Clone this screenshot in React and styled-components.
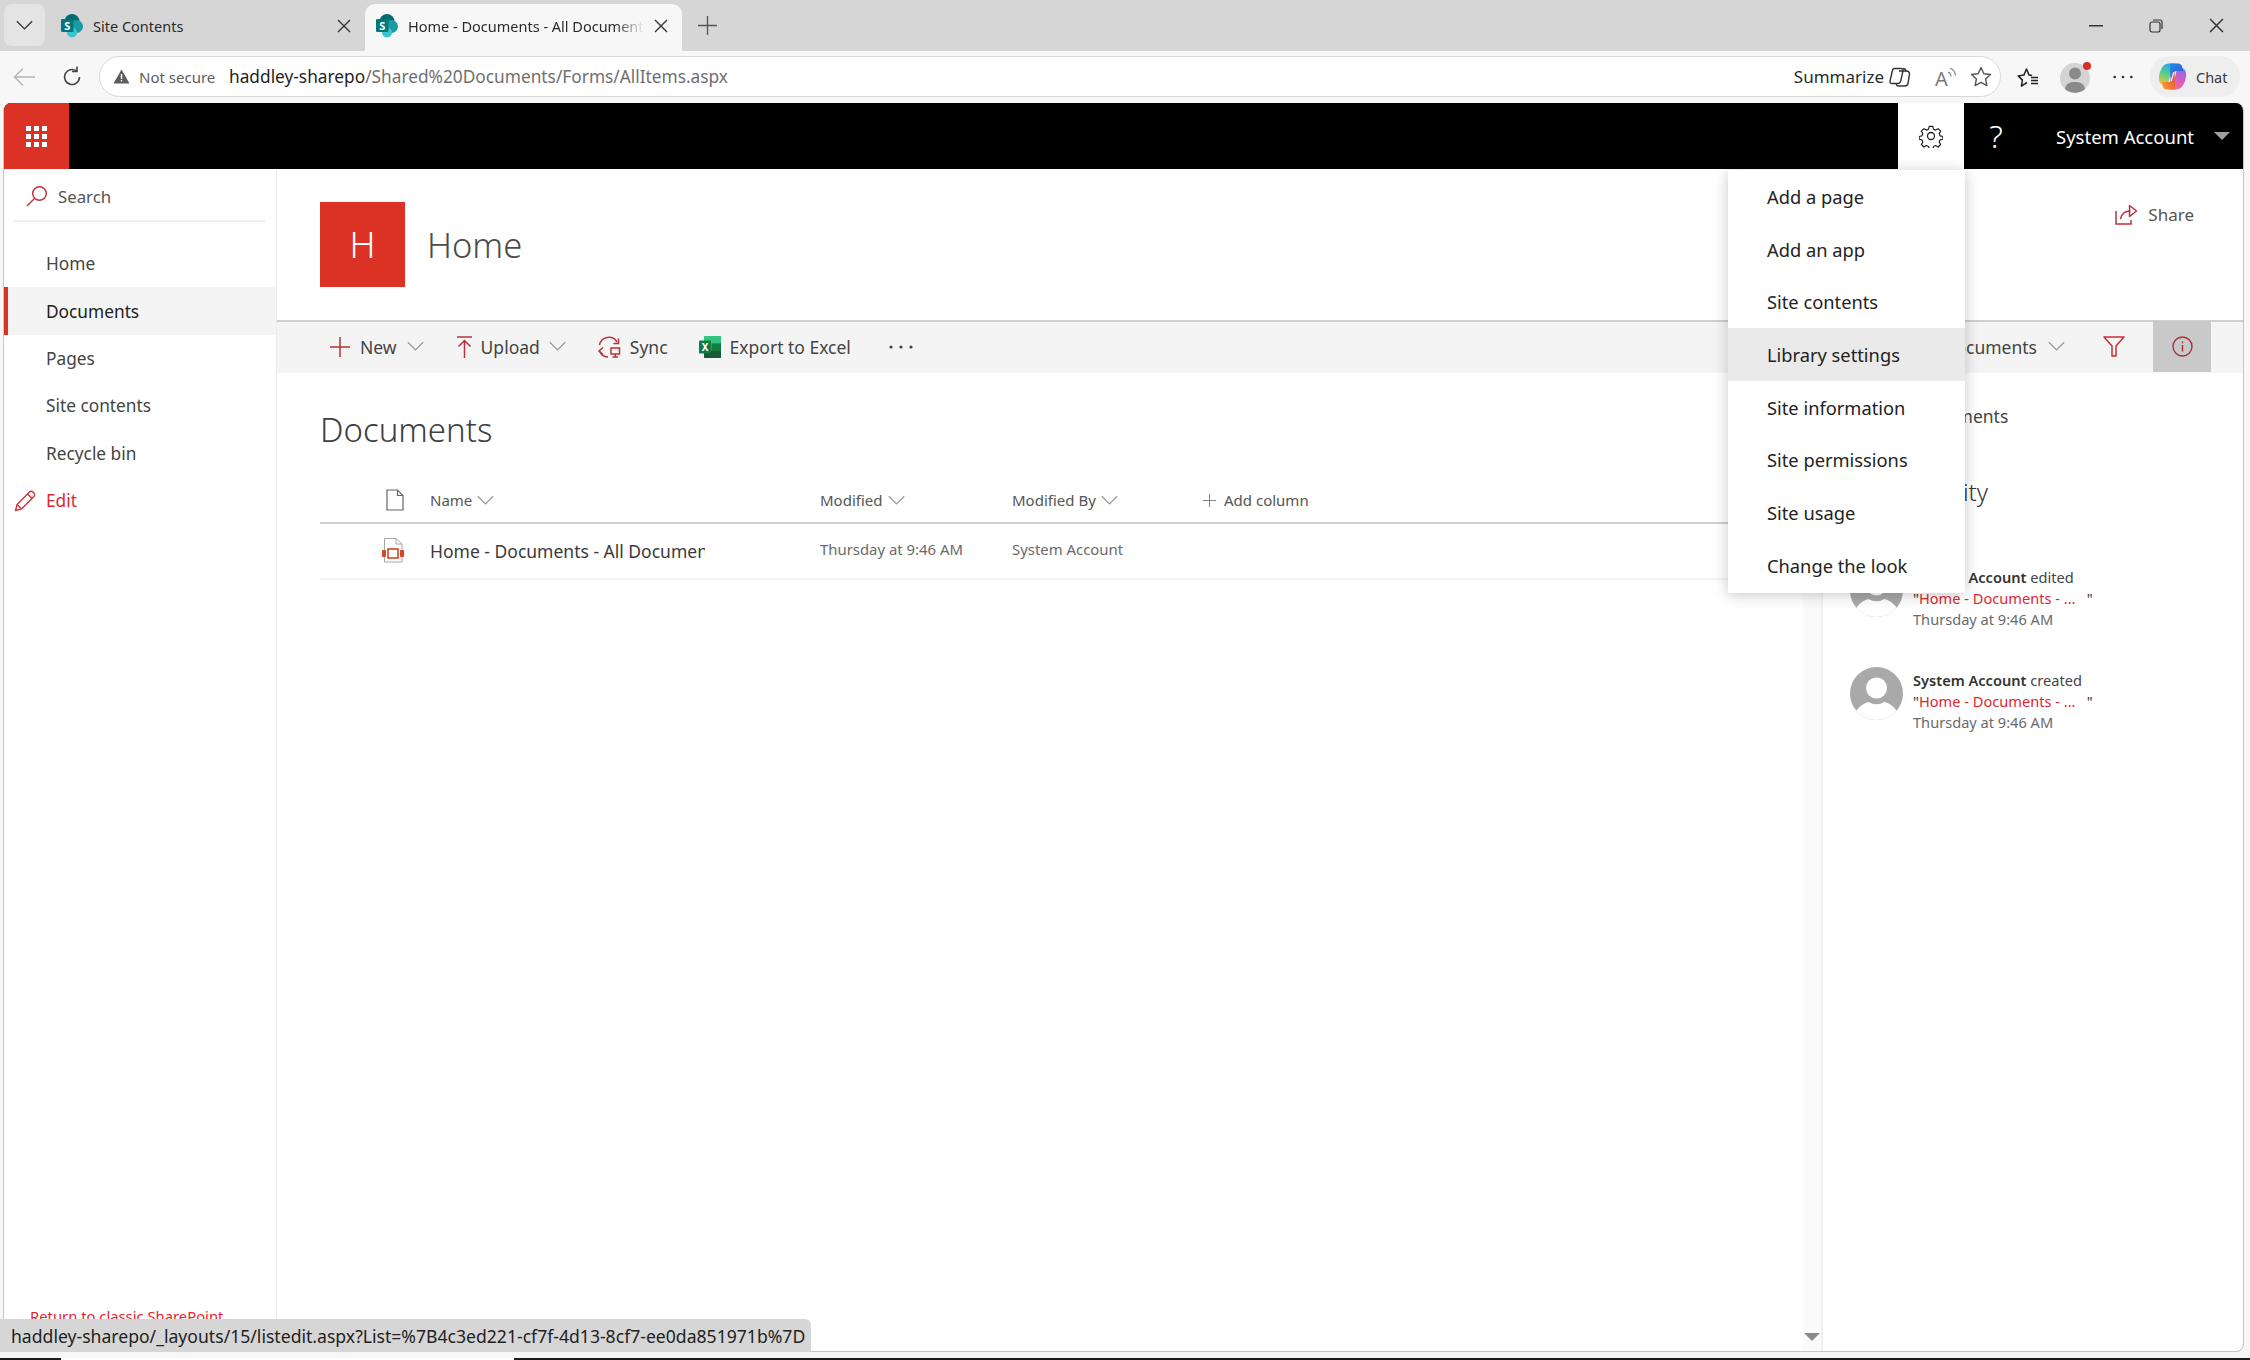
import React from 'react'
import styled, { createGlobalStyle } from 'styled-components'

const FONT = '"Noto Sans", "Open Sans", "Liberation Sans", sans-serif'
const RED = '#dc3125'
const ICON_RED = '#b5343a'

const Global = createGlobalStyle`
  html, body { margin: 0; padding: 0; background: #f7f7f7; }
  * { box-sizing: border-box; }
`

// browser chrome
const Page = styled.div`
  position: relative;
  width: 2250px;
  height: 1360px;
  display: flex;
  flex-direction: column;
  overflow: hidden;
  background: #f7f7f7;
  font-family: ${FONT};
  color: #333;
`
const TabStrip = styled.div`
  height: 51px;
  flex: none;
  display: flex;
  align-items: flex-end;
  padding-left: 4px;
  background: #d6d6d6;
`
const TabListButton = styled.div`
  width: 41px;
  height: 42px;
  margin-bottom: 5px;
  margin-right: 5px;
  border-radius: 8px;
  background: #e4e4e4;
  display: flex;
  align-items: center;
  justify-content: center;
`
const Tab = styled.div`
  position: relative;
  height: 47px;
  width: ${p => p.$width}px;
  display: flex;
  align-items: center;
  gap: 10px;
  padding: 0 14px 4px 11px;
  font-size: 14.5px;
  color: #2b2b2b;
  border-radius: 10px 10px 0 0;
  background: ${p => (p.$active ? '#f7f7f7' : 'transparent')};
`
const TabTitle = styled.div`
  flex: 1;
  overflow: hidden;
  white-space: nowrap;
  ${p => p.$fade && 'mask-image: linear-gradient(to right, #000 88%, transparent 100%);'}
`
const NewTab = styled.div`
  width: 50px;
  height: 47px;
  display: flex;
  align-items: center;
  justify-content: center;
  padding-bottom: 4px;
`
const WindowButtons = styled.div`
  margin-left: auto;
  height: 51px;
  display: flex;
  align-items: center;
  padding-right: 3px;
`
const WindowButton = styled.div`
  width: 60.5px;
  display: flex;
  justify-content: center;
`
const Toolbar = styled.div`
  height: 52px;
  flex: none;
  display: flex;
  align-items: center;
  padding-bottom: 1px;
  background: #f7f7f7;
`
const ToolIcon = styled.div`
  flex: none;
  width: ${p => p.$w || 22}px;
  margin-left: ${p => p.$ml || 0}px;
  display: flex;
  align-items: center;
  justify-content: center;
`
const AddressBar = styled.div`
  width: 1902px;
  height: 41px;
  margin-left: 16px;
  flex: none;
  display: flex;
  align-items: center;
  padding: 0 8px 0 13px;
  border: 1px solid #d8d8d8;
  border-radius: 21px;
  background: #fff;
`
const NotSecure = styled.div`
  width: 90px;
  margin-left: 9px;
  font-size: 15px;
  color: #5c5c5c;
  white-space: nowrap;
`
const Url = styled.div`
  color: #6f6f6f;
  white-space: nowrap;
  font-size: 17.3px;
  b { font-weight: 400; color: #1f1f1f; }
`
const AddressActions = styled.div`
  margin-left: auto;
  display: flex;
  align-items: center;
  gap: 4px;
`
const Summarize = styled.div`
  font-size: 17px;
  color: #2b2b2b;
  white-space: nowrap;
`
const ChatPill = styled.div`
  width: 90px;
  height: 41px;
  margin-left: 17px;
  flex: none;
  display: flex;
  align-items: center;
  gap: 9px;
  padding-left: 8px;
  border-radius: 20px;
  background: #eeeeee;
  font-size: 14.5px;
  color: #3a3a3a;
`

// sharepoint frame
const Frame = styled.div`
  position: relative;
  flex: 1;
  min-height: 0;
  margin: 0 6px 6px 3px;
  display: flex;
  flex-direction: column;
  overflow: hidden;
  background: #fff;
  border: 1px solid #c6c6c6;
  border-top: none;
  border-radius: 8px;
`
const SuiteBar = styled.div`
  height: 66px;
  flex: none;
  display: flex;
  align-items: center;
  background: #000;
  color: #fff;
`
const Waffle = styled.div`
  width: 65px;
  height: 100%;
  display: flex;
  align-items: center;
  justify-content: center;
  background: ${RED};
`
const SuiteGear = styled.div`
  width: 66px;
  height: 100%;
  margin-left: auto;
  display: flex;
  align-items: center;
  justify-content: center;
  background: #fff;
`
const SuiteHelp = styled.div`
  width: 64px;
  text-align: center;
  font-size: 32px;
  font-weight: 300;
  line-height: 1;
`
const SuiteUser = styled.div`
  display: flex;
  align-items: center;
  margin-left: 28px;
  padding-right: 13px;
  font-size: 18.5px;
  gap: 20px;
  white-space: nowrap;
`
const Caret = styled.div`
  width: 0;
  height: 0;
  border-left: 8px solid transparent;
  border-right: 8px solid transparent;
  border-top: 8px solid ${p => p.$color || '#a0a0a0'};
`
const Body = styled.div`
  flex: 1;
  min-height: 0;
  display: flex;
`
const Sidebar = styled.div`
  width: 273px;
  flex: none;
  display: flex;
  flex-direction: column;
  border-right: 1px solid #ececec;
`
const SearchRow = styled.div`
  height: 53px;
  margin: 0 11px 0 10px;
  padding: 3px 0 0 12px;
  display: flex;
  align-items: center;
  gap: 10px;
  border-bottom: 2px solid #eeeeee;
  font-size: 16.8px;
  color: #555;
`
const Nav = styled.div`
  margin-top: 18px;
`
const NavItem = styled.div`
  height: 47.4px;
  display: flex;
  align-items: center;
  padding-left: ${p => (p.$icon ? 6 : 38)}px;
  gap: 10px;
  border-left: 4px solid ${p => (p.$active ? RED : 'transparent')};
  background: ${p => (p.$active ? '#f4f4f4' : 'transparent')};
  color: ${p => (p.$link ? '#e0252f' : p.$active ? '#222' : '#444')};
  font-size: 17.3px;
`
const ClassicLink = styled.div`
  margin-top: auto;
  padding: 0 0 23px 26px;
  font-size: 14.8px;
  line-height: 24px;
  color: #e0252f;
  white-space: nowrap;
`
const Main = styled.div`
  flex: 1;
  min-width: 0;
  display: flex;
  flex-direction: column;
`
const TitleRow = styled.div`
  height: 151px;
  flex: none;
  display: flex;
  padding: 33px 49px 0 43px;
`
const SiteLogo = styled.div`
  width: 85px;
  height: 85px;
  display: flex;
  align-items: center;
  justify-content: center;
  background: ${RED};
  color: #fff;
  font-size: 36px;
  font-weight: 300;
`
const SiteName = styled.div`
  height: 85px;
  margin-left: 22px;
  display: flex;
  align-items: center;
  font-size: 34.5px;
  font-weight: 300;
  color: #4c4c4c;
`
const ShareButton = styled.div`
  margin-left: auto;
  height: 28px;
  margin-top: -2px;
  display: flex;
  align-items: center;
  gap: 10px;
  font-size: 17px;
  color: #555;
`
const CommandBar = styled.div`
  height: 53px;
  flex: none;
  display: flex;
  align-items: center;
  padding: 0 32px 2px 53px;
  border-top: 2px solid #cfcfcf;
  background: #f4f4f4;
  font-size: 17.5px;
  color: #444;
`
const Command = styled.div`
  display: flex;
  align-items: center;
  gap: ${p => p.$gap || 10}px;
  margin-left: ${p => p.$ml || 0}px;
  white-space: nowrap;
`
const CommandRight = styled.div`
  margin-left: auto;
  height: calc(100% + 2px);
  display: flex;
  align-items: center;
`
const InfoButton = styled.div`
  width: 58px;
  height: 100%;
  margin-left: 28px;
  display: flex;
  align-items: center;
  justify-content: center;
  background: #c9c9c9;
`
const Content = styled.div`
  flex: 1;
  min-height: 0;
  display: flex;
`
const ListArea = styled.div`
  flex: 1;
  min-width: 0;
  padding-left: 43px;
`
const Heading = styled.div`
  margin-top: 35px;
  font-size: 33px;
  font-weight: 300;
  line-height: 44px;
  color: #404040;
`
const ListRow = styled.div`
  display: grid;
  grid-template-columns: 110px 390px 192px 191px 1fr;
  align-items: center;
  height: ${p => (p.$header ? 45 : 56)}px;
  margin-top: ${p => (p.$header ? 26.5 : 0)}px;
  border-bottom: ${p => (p.$header ? '2px solid #d0d0d0' : '2px solid #f4f4f4')};
`
const IconCell = styled.div`
  display: flex;
  justify-content: flex-end;
  padding-right: 26px;
`
const HeaderCell = styled.div`
  display: flex;
  align-items: center;
  gap: ${p => p.$gap || 5}px;
  font-size: 15px;
  color: #555;
  white-space: nowrap;
`
const FileName = styled.div`
  width: 275px;
  overflow: hidden;
  white-space: nowrap;
  font-size: 17.5px;
  color: #3a3a3a;
`
const MetaCell = styled.div`
  margin-top: -4px;
  font-size: 14.9px;
  color: #6a6a6a;
  white-space: nowrap;
`
const ScrollTrack = styled.div`
  width: 20px;
  flex: none;
  display: flex;
  align-items: flex-end;
  justify-content: center;
  padding-bottom: 10px;
  background: #fafafa;
  border-right: 2px solid #efefef;
`
const InfoPanel = styled.div`
  width: 420px;
  flex: none;
  padding-left: 27px;
`
const InfoTitle = styled.div`
  margin-top: 30px;
  padding-left: 64px;
  font-size: 17.5px;
  line-height: 26px;
  color: #444;
`
const InfoHeading = styled.div`
  margin-top: 47px;
  padding-left: 62px;
  font-size: 24px;
  line-height: 32px;
  font-weight: 300;
  color: #333;
`
const ActivityList = styled.div`
  margin-top: 56px;
  display: flex;
  flex-direction: column;
  gap: 37px;
`
const ActivityItem = styled.div`
  display: flex;
  gap: 10px;
`
const ActivityText = styled.div`
  padding-top: 3px;
  font-size: 14.6px;
  line-height: 21px;
  color: #444;
  white-space: nowrap;
  b { font-weight: 600; color: #333; }
`
const ActivityLink = styled.div`
  color: #333;
  span { color: #e0252f; }
`
const ActivityTime = styled.div`
  color: #6a6a6a;
`

// overlays
const SettingsMenu = styled.div`
  position: absolute;
  top: 67px;
  right: 278px;
  width: 237px;
  height: 423px;
  background: #fff;
  box-shadow: 0 2px 14px rgba(0, 0, 0, 0.22);
`
const MenuItem = styled.div`
  height: 52.7px;
  display: flex;
  align-items: center;
  padding-left: 39px;
  font-size: 18.3px;
  color: #222;
  background: ${p => (p.$hover ? '#eaeaea' : 'transparent')};
`
const StatusBubble = styled.div`
  position: absolute;
  left: 0;
  bottom: 8px;
  width: 811px;
  height: 33px;
  display: flex;
  align-items: center;
  padding-left: 11px;
  border-radius: 0 6px 0 0;
  background: #d6d6d6;
  font-size: 17.6px;
  color: #222;
  white-space: nowrap;
`
const TaskbarEdge = styled.div`
  height: 2px;
  flex: none;
  background: linear-gradient(to right, #1a1a1a 61px, #fff 61px, #fff 514px, #1a1a1a 514px);
`

const Chevron = ({ size = 17, color = '#989898', width = 1.2 }) => (
  <svg width={size} height={size * 0.6} viewBox="0 0 20 12" fill="none" stroke={color} strokeWidth={width * 1.2}>
    <path d="M1 1.5l9 9 9-9" />
  </svg>
)

const CloseX = ({ size = 14, color = '#333', width = 1.4 }) => (
  <svg width={size} height={size} viewBox="0 0 14 14" fill="none" stroke={color} strokeWidth={width}>
    <path d="M1 1l12 12M13 1L1 13" />
  </svg>
)

const SharePointIcon = () => (
  <svg width="22" height="24" viewBox="0 0 22 24">
    <circle cx="11" cy="7.5" r="7.5" fill="#036c70" />
    <circle cx="15.5" cy="12.5" r="6.5" fill="#1a9ba1" />
    <circle cx="11" cy="18.5" r="5" fill="#37c6d0" />
    <rect x="0" y="5" width="12.5" height="13" rx="1.2" fill="#03787c" />
    <text x="6.2" y="15.5" fontSize="11" fontWeight="700" fill="#fff" textAnchor="middle" fontFamily={FONT}>S</text>
  </svg>
)

const ReloadIcon = () => (
  <svg width="22" height="24" viewBox="0 0 22 24" fill="none" stroke="#444" strokeWidth="1.6">
    <path d="M18.5 12a7.5 7.5 0 1 1-3-6" />
    <path d="M16 1.5v5h-5" />
  </svg>
)

const WarnIcon = () => (
  <svg width="17" height="17" viewBox="0 0 17 17">
    <path d="M8.5 1.5L16.5 15.5H.5z" fill="#5c5c5c" />
    <rect x="7.8" y="6" width="1.4" height="5" fill="#fff" />
    <rect x="7.8" y="12" width="1.4" height="1.5" fill="#fff" />
  </svg>
)

const SummarizeIcon = () => (
  <svg width="24" height="24" viewBox="0 0 24 24" fill="none" stroke="#333" strokeWidth="1.4" strokeLinejoin="round">
    <path d="M6.5 3.5H13c1.5 0 2.3 1 2 2.4l-2.3 10.2c-.4 1.5-1.400 2.400-3 2.400H4c-1.500 0-2.300-1-2-2.400L4.300 6c.3-1.500 1-2.500 2.200-2.500z" />
    <path d="M11 6h7c2 0 3.500 1.200 3.500 3L20 18.500c-.4 1.800-1.500 2.500-3 2.500h-6.500c-1.500 0-2.300-1-2-2.400" />
    <path d="M15 3.500c1.500 0 2.700.6 3 2.500" />
  </svg>
)

const ReadAloudIcon = () => (
  <svg width="22" height="24" viewBox="0 0 22 24" fill="none" stroke="#8c8c8c" strokeWidth="1.3">
    <text x="0" y="21" fontSize="20" fill="#7a7a7a" stroke="none" fontFamily={FONT}>A</text>
    <path d="M13 7a5 5 0 0 1 3 4.500M15 3a9 9 0 0 1 5.500 7.500" />
  </svg>
)

const StarIcon = ({ color = '#555' }) => (
  <svg width="22" height="22" viewBox="0 0 22 22" fill="none" stroke={color} strokeWidth="1.4" strokeLinejoin="round">
    <path d="M11 1.500l2.900 6.200 6.600.8-4.900 4.500 1.300 6.600L11 16.300l-5.900 3.300 1.300-6.600L1.500 8.500l6.600-.8z" />
  </svg>
)

const FavoritesIcon = () => (
  <svg width="22" height="22" viewBox="0 0 22 22" fill="none" stroke="#222" strokeWidth="1.5" strokeLinejoin="round">
    <path d="M10 16.500l-5.600 3.600 1-6L1.200 9.900l5.700-.8L9.500 3l2.600 6.100 3 .4" />
    <path d="M14 11.500h7M14 14.500h7M14 17.500h7" />
  </svg>
)

const ProfileIcon = () => (
  <svg width="32" height="32" viewBox="0 0 32 32">
    <circle cx="15" cy="17" r="15" fill="#d4d4d4" />
    <circle cx="15" cy="12.500" r="6" fill="#8a8a8a" />
    <path d="M5 28c1-5.500 5-7 10-7s9 1.500 10 7a15 15 0 0 1-20 0z" fill="#8a8a8a" />
    <circle cx="27" cy="5" r="4" fill="#dc2d20" />
  </svg>
)

const CopilotIcon = () => (
  <svg width="29" height="29" viewBox="0 0 29 29">
    <defs>
      <linearGradient id="cpLeft" x1="0.6" y1="0" x2="0.3" y2="1">
        <stop offset="0" stopColor="#2aa4f0" />
        <stop offset="0.5" stopColor="#57cf8a" />
        <stop offset="1" stopColor="#f6c43f" />
      </linearGradient>
      <linearGradient id="cpTop" x1="0" y1="0" x2="1" y2="1">
        <stop offset="0" stopColor="#1c8ce8" />
        <stop offset="1" stopColor="#3a4fd8" />
      </linearGradient>
      <linearGradient id="cpRight" x1="0.7" y1="0" x2="0.3" y2="1">
        <stop offset="0" stopColor="#8a6ce8" />
        <stop offset="0.5" stopColor="#d65cc0" />
        <stop offset="1" stopColor="#f0708a" />
      </linearGradient>
      <linearGradient id="cpBottom" x1="1" y1="0" x2="0" y2="1">
        <stop offset="0" stopColor="#e8403a" />
        <stop offset="1" stopColor="#f8a030" />
      </linearGradient>
    </defs>
    <path d="M11 1.500C5 1.500 2 8 1 14c-.7 5 1 9 5 9 3 0 4.300-2 5-5l3-12c.8-2.800 2-4.500 5-4.500z" fill="url(#cpLeft)" />
    <path d="M18 27.500c6 0 9-6.500 10-12.500.7-5-1-9-5-9-3 0-4.300 2-5 5l-3 12c-.8 2.800-2 4.500-5 4.500z" fill="url(#cpRight)" />
    <path d="M12 1.500h8c2.500 0 4 1.500 4.500 4.500l.5 3h-6c-2.500 0-3.800 1-4.500 4l-2 7z" fill="url(#cpTop)" />
    <path d="M17 27.500H9c-2.500 0-4-1.500-4.500-4.500L4 20h6c2.500 0 3.800-1 4.500-4l2-7z" fill="url(#cpBottom)" />
    <path d="M13.300 19l2.400-9" stroke="#fff" strokeOpacity="0.65" strokeWidth="1.300" fill="none" />
  </svg>
)

const WaffleIcon = () => (
  <svg width="21" height="21" viewBox="0 0 21 21" fill="#fff">
    {[0, 8, 16].map(y => [0, 8, 16].map(x => <rect key={`${x}-${y}`} x={x} y={y} width="5" height="5" />))}
  </svg>
)

const GearIcon = () => (
  <svg width="24" height="24" viewBox="0 0 24 24" fill="none" stroke="#222" strokeWidth="1.3" strokeLinejoin="round">
    <circle cx="12" cy="12" r="3.500" />
    <path d="M10 1.500h4l.7 3 2.400 1 2.700-1.600 2.800 2.800-1.600 2.700 1 2.400 3 .7v3l-3 .7-1 2.400 1.600 2.700-2.800 2.800-2.700-1.600-2.400 1-.7 3h-4l-.7-3-2.400-1-2.700 1.600-2.800-2.800 1.600-2.700-1-2.400-3-.7v-3l3-.7 1-2.400-1.600-2.700 2.800-2.800 2.700 1.600 2.400-1z" transform="translate(1.100 1.100) scale(.91)" />
  </svg>
)

const SearchIcon = () => (
  <svg width="22" height="22" viewBox="0 0 22 22" fill="none" stroke="#c0343a" strokeWidth="1.500">
    <circle cx="13.500" cy="8.500" r="6.800" />
    <path d="M8.500 13.500L1 21" />
  </svg>
)

const PencilIcon = () => (
  <svg width="22" height="22" viewBox="0 0 22 22" fill="none" stroke="#d0343a" strokeWidth="1.400" strokeLinejoin="round">
    <path d="M1.500 20.500l1.600-6L15.500 2a2.400 2.400 0 0 1 3.400 0l1 1a2.400 2.400 0 0 1 0 3.400L7.500 18.900z" />
    <path d="M13.500 4l4.500 4.500M3.100 14.500l4.400 4.400" />
  </svg>
)

const PlusIcon = ({ size = 20, color = ICON_RED, width = 1.5 }) => (
  <svg width={size} height={size} viewBox="0 0 20 20" fill="none" stroke={color} strokeWidth={width}>
    <path d="M10 0v20M0 10h20" />
  </svg>
)

const UploadIcon = () => (
  <svg width="15" height="22" viewBox="0 0 15 22" fill="none" stroke={ICON_RED} strokeWidth="1.500">
    <path d="M0 1h15M7.500 22V4.500M1.500 10.500l6-6 6 6" />
  </svg>
)

const SyncIcon = () => (
  <svg width="24" height="22" viewBox="0 0 24 22" fill="none" stroke={ICON_RED} strokeWidth="1.500">
    <path d="M2.500 9A9.500 9.500 0 0 1 20 6" />
    <path d="M21.500 2.500V7.500H16.500" />
    <path d="M6 11.500L2 15l4 3.500" />
    <path d="M2.500 15A9.500 9.500 0 0 0 11 21" />
    <rect x="14" y="12" width="8.500" height="6" />
    <path d="M18.250 18v3M15.500 21h5.500" />
  </svg>
)

const ExcelIcon = () => (
  <svg width="22" height="22" viewBox="0 0 22 22">
    <rect x="5" y="0" width="17" height="22" rx="1" fill="#21a366" />
    <rect x="5" y="0" width="17" height="7.500" rx="1" fill="#33c481" />
    <rect x="13" y="7.500" width="9" height="7" fill="#107c41" />
    <rect x="5" y="14.500" width="17" height="7.500" rx="1" fill="#185c37" />
    <rect x="0" y="4.500" width="12" height="13" rx="1" fill="#107c41" />
    <text x="6" y="14.500" fontSize="10" fontWeight="700" fill="#fff" textAnchor="middle" fontFamily={FONT}>X</text>
  </svg>
)

const MoreDots = ({ color = '#444' }) => (
  <svg width="24" height="4" viewBox="0 0 24 4" fill={color}>
    <circle cx="2" cy="2" r="1.600" />
    <circle cx="12" cy="2" r="1.600" />
    <circle cx="22" cy="2" r="1.600" />
  </svg>
)

const ShareIcon = () => (
  <svg width="23" height="21" viewBox="0 0 23 21" fill="none" stroke={ICON_RED} strokeWidth="1.500">
    <path d="M1 7v13h15v-4" />
    <path d="M5.500 15c1-5.500 5-8 10-8" />
    <path d="M14.500 1.500l7 5.500-7 5.500z" strokeLinejoin="round" />
  </svg>
)

const FilterIcon = () => (
  <svg width="22" height="21" viewBox="0 0 22 21" fill="none" stroke="#c82c35" strokeWidth="1.500" strokeLinejoin="round">
    <path d="M1 1h20l-8 9v10h-4V10z" />
  </svg>
)

const InfoIcon = () => (
  <svg width="21" height="21" viewBox="0 0 21 21" fill="none" stroke="#a83232" strokeWidth="1.400">
    <circle cx="10.500" cy="10.500" r="9.500" />
    <path d="M10.500 9v6.500M10.500 5.500v1.800" />
  </svg>
)

const BlankDocIcon = () => (
  <svg width="18" height="22" viewBox="0 0 18 22" fill="none" stroke="#666" strokeWidth="1.200">
    <path d="M1 1h10.500L17 6.500V21H1z" />
    <path d="M11.500 1v5.500H17" />
  </svg>
)

const PageFileIcon = () => (
  <svg width="22" height="25" viewBox="0 0 22 25">
    <path d="M2.500 .5H14L20 6v18H2.500z" fill="#fff" stroke="#a6a6a6" />
    <path d="M14 .5V6h6" fill="none" stroke="#a6a6a6" />
    <rect x="0" y="12" width="4" height="7" rx="1" fill="#d24726" />
    <rect x="18" y="12" width="4" height="7" rx="1" fill="#d24726" />
    <rect x="6" y="11" width="10" height="9" fill="#fff" stroke="#d24726" strokeWidth="1.600" />
  </svg>
)

const PersonAvatar = () => (
  <svg width="53" height="53" viewBox="0 0 53 53">
    <defs>
      <clipPath id="avatarClip"><circle cx="26.500" cy="26.500" r="26.500" /></clipPath>
    </defs>
    <circle cx="26.500" cy="26.500" r="26.500" fill="#a9a9a9" />
    <g clipPath="url(#avatarClip)" fill="#fff">
      <circle cx="26.500" cy="21" r="10.500" />
      <path d="M4 53c0-12 10-17 15-18 4 3 11 3 15 0 5 1 15 6 15 18z" />
    </g>
  </svg>
)

const Activity = ({ verb }) => (
  <ActivityItem>
    <PersonAvatar />
    <ActivityText>
      <div><b>System Account</b> {verb}</div>
      <ActivityLink>"<span>Home - Documents - ...</span> &nbsp;&nbsp;"</ActivityLink>
      <ActivityTime>Thursday at 9:46 AM</ActivityTime>
    </ActivityText>
  </ActivityItem>
)

const menuItems = ['Add a page', 'Add an app', 'Site contents', 'Library settings', 'Site information', 'Site permissions', 'Site usage', 'Change the look']
const navItems = ['Home', 'Documents', 'Pages', 'Site contents', 'Recycle bin']

export default function App() {
  return (
    <Page>
      <Global />
      <TabStrip>
        <TabListButton><Chevron size={17} color="#333" width={1.3} /></TabListButton>
        <Tab $width={315}>
          <SharePointIcon />
          <TabTitle>Site Contents</TabTitle>
          <CloseX />
        </Tab>
        <Tab $active $width={317}>
          <SharePointIcon />
          <TabTitle $fade>Home - Documents - All Documents</TabTitle>
          <CloseX />
        </Tab>
        <NewTab><PlusIcon size={19} color="#555" width={1.4} /></NewTab>
        <WindowButtons>
          <WindowButton><svg width="14" height="2" viewBox="0 0 14 2"><rect width="14" height="1.500" fill="#333" /></svg></WindowButton>
          <WindowButton>
            <svg width="14" height="14" viewBox="0 0 14 14" fill="none" stroke="#333" strokeWidth="1.200">
              <rect x="1" y="3" width="10" height="10" rx="2" />
              <path d="M4 1h7a2 2 0 0 1 2 2v7" />
            </svg>
          </WindowButton>
          <WindowButton><CloseX size={15} /></WindowButton>
        </WindowButtons>
      </TabStrip>
      <Toolbar>
        <ToolIcon $ml={13}>
          <svg width="22" height="20" viewBox="0 0 22 20" fill="none" stroke="#b5b5b5" strokeWidth="1.500">
            <path d="M22 10H2M10 1.500L1.500 10l8.500 8.500" />
          </svg>
        </ToolIcon>
        <ToolIcon $ml={26}><ReloadIcon /></ToolIcon>
        <AddressBar>
          <WarnIcon />
          <NotSecure>Not secure</NotSecure>
          <Url><b>haddley-sharepo</b>/Shared%20Documents/Forms/AllItems.aspx</Url>
          <AddressActions>
            <Summarize>Summarize</Summarize>
            <SummarizeIcon />
            <ToolIcon $ml={19}><ReadAloudIcon /></ToolIcon>
            <ToolIcon $ml={9}><StarIcon /></ToolIcon>
          </AddressActions>
        </AddressBar>
        <ToolIcon $ml={16}><FavoritesIcon /></ToolIcon>
        <ToolIcon $ml={21} $w={32}><ProfileIcon /></ToolIcon>
        <ToolIcon $ml={21} $w={20}><MoreDots color="#333" /></ToolIcon>
        <ChatPill>
          <CopilotIcon />
          Chat
        </ChatPill>
      </Toolbar>
      <Frame>
        <SuiteBar>
          <Waffle><WaffleIcon /></Waffle>
          <SuiteGear><GearIcon /></SuiteGear>
          <SuiteHelp>?</SuiteHelp>
          <SuiteUser>System Account<Caret /></SuiteUser>
        </SuiteBar>
        <Body>
          <Sidebar>
            <SearchRow><SearchIcon />Search</SearchRow>
            <Nav>
              {navItems.map(n => (
                <NavItem key={n} $active={n === 'Documents'}>{n}</NavItem>
              ))}
              <NavItem $link $icon><PencilIcon />Edit</NavItem>
            </Nav>
            <ClassicLink>Return to classic SharePoint</ClassicLink>
          </Sidebar>
          <Main>
            <TitleRow>
              <SiteLogo>H</SiteLogo>
              <SiteName>Home</SiteName>
              <ShareButton><ShareIcon />Share</ShareButton>
            </TitleRow>
            <CommandBar>
              <Command $gap={10}><PlusIcon />New<Chevron /></Command>
              <Command $ml={33} $gap={9}><UploadIcon />Upload<Chevron /></Command>
              <Command $ml={31} $gap={9}><SyncIcon />Sync</Command>
              <Command $ml={31} $gap={9}><ExcelIcon />Export to Excel</Command>
              <Command $ml={38}><MoreDots /></Command>
              <CommandRight>
                <Command $gap={11}>All Documents<Chevron /></Command>
                <Command $ml={38}><FilterIcon /></Command>
                <InfoButton><InfoIcon /></InfoButton>
              </CommandRight>
            </CommandBar>
            <Content>
              <ListArea>
                <Heading>Documents</Heading>
                <ListRow $header>
                  <IconCell><BlankDocIcon /></IconCell>
                  <HeaderCell>Name<Chevron /></HeaderCell>
                  <HeaderCell>Modified<Chevron /></HeaderCell>
                  <HeaderCell>Modified By<Chevron /></HeaderCell>
                  <HeaderCell $gap={8}><PlusIcon size={13} color="#777" width={1.4} />Add column</HeaderCell>
                </ListRow>
                <ListRow>
                  <IconCell><PageFileIcon /></IconCell>
                  <FileName>Home - Documents - All Documents</FileName>
                  <MetaCell>Thursday at 9:46 AM</MetaCell>
                  <MetaCell>System Account</MetaCell>
                </ListRow>
              </ListArea>
              <ScrollTrack><Caret $color="#8a8a8a" /></ScrollTrack>
              <InfoPanel>
                <InfoTitle>Documents</InfoTitle>
                <InfoHeading>Activity</InfoHeading>
                <ActivityList>
                  <Activity verb="edited" />
                  <Activity verb="created" />
                </ActivityList>
              </InfoPanel>
            </Content>
          </Main>
        </Body>
        <SettingsMenu>
          {menuItems.map(m => (
            <MenuItem key={m} $hover={m === 'Library settings'}>{m}</MenuItem>
          ))}
        </SettingsMenu>
      </Frame>
      <TaskbarEdge />
      <StatusBubble>haddley-sharepo/_layouts/15/listedit.aspx?List=%7B4c3ed221-cf7f-4d13-8cf7-ee0da851971b%7D</StatusBubble>
    </Page>
  )
}
